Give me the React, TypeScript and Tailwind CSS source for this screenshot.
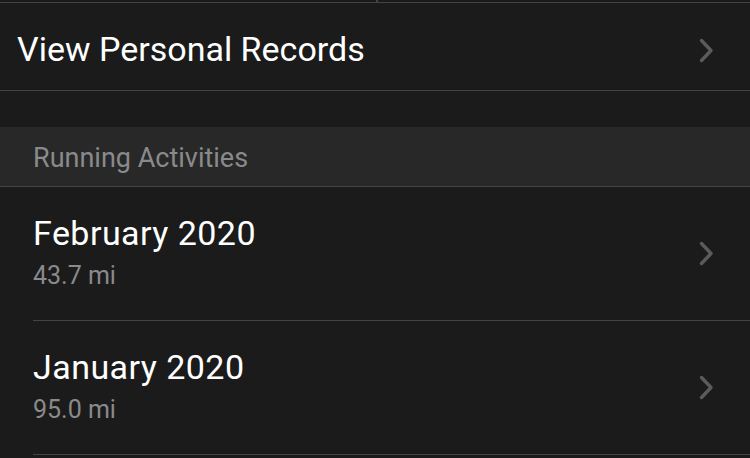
const rows = [
  { title: "February 2020", distance: "43.7 mi" },
  { title: "January 2020", distance: "95.0 mi" },
];

function Chevron() {
  return (
    <svg width="15" height="25" viewBox="0 0 15 25" fill="none" className="shrink-0">
      <path d="M2.5 2.5 L12 12.5 L2.5 22.5" stroke="#5b5b5d" strokeWidth="3.4" strokeLinecap="round" strokeLinejoin="round" />
    </svg>
  );
}

export default function App() {
  return (
    <div className="h-[458px] w-[750px] overflow-hidden bg-[#1b1b1b] font-['Roboto',sans-serif]">
      <div className="flex h-[2px]">
        <div className="w-[376px]" />
        <div className="w-[2px] bg-[#444446]" />
      </div>
      <div className="h-px bg-[#444446]" />

      <div className="flex h-[87px] items-start justify-between pl-[17px] pr-[36px] pt-[26px]">
        <div className="text-[34px] leading-[40px] text-white">View Personal Records</div>
        <div className="pt-[9px]">
          <Chevron />
        </div>
      </div>
      <div className="h-px bg-[#444446]" />

      <div className="h-[36px]" />

      <div className="h-[59px] bg-[#282828] pl-[33px] pt-[16px]">
        <div className="text-[27px] leading-[30px] text-[#8a8a8c]">Running Activities</div>
      </div>
      <div className="h-px bg-[#444446]" />

      {rows.map((row) => (
        <div key={row.title}>
          <div className="flex h-[133px] items-center justify-between pl-[33px] pr-[36px]">
            <div className="flex flex-col pb-[4px]">
              <div className="text-[34px] leading-[40px] tracking-[0.45px] text-white">{row.title}</div>
              <div className="mt-[9px] text-[25px] leading-[28px] text-[#8a8a8c]">{row.distance}</div>
            </div>
            <Chevron />
          </div>
          <div className="ml-[33px] h-px bg-[#444446]" />
        </div>
      ))}
    </div>
  );
}
